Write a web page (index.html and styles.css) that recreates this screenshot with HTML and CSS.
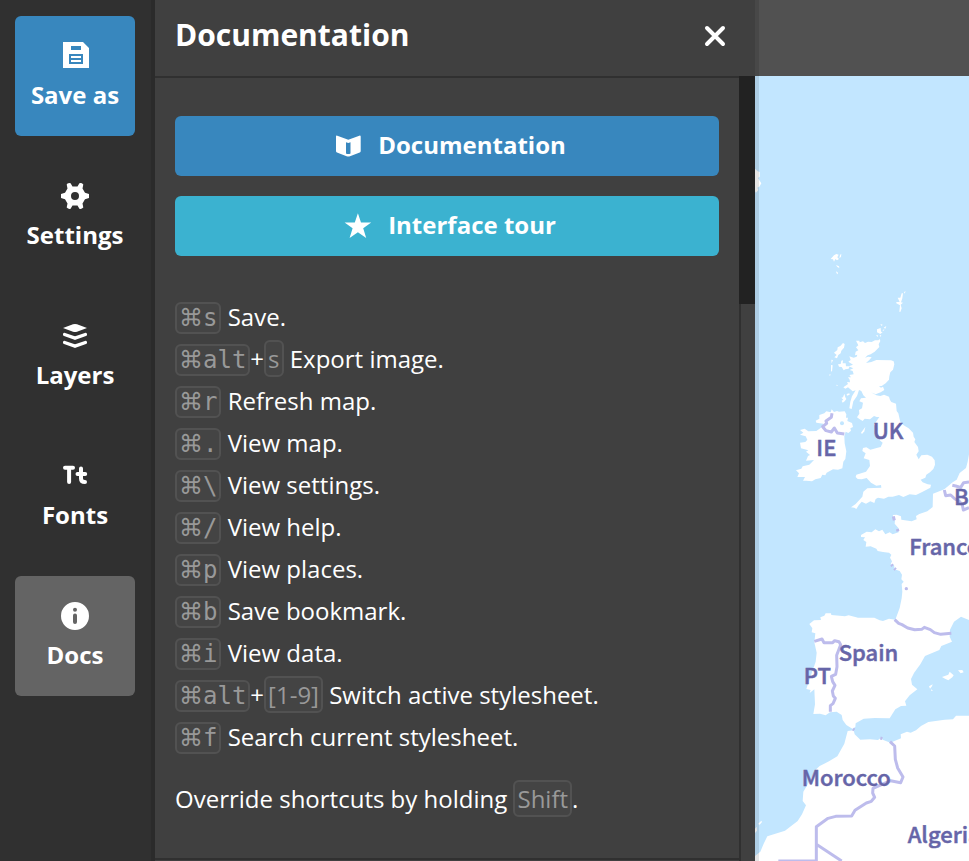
FILE: index.html
```
<!DOCTYPE html>
<html lang="en">
<head>
<meta charset="utf-8">
<title>Documentation</title>
<link rel="stylesheet" href="styles.css">
</head>
<body>
<div class="app">
  <nav class="sidebar">
    <button class="tab tab-primary" type="button">
      <svg class="icon" viewBox="0 0 40 40" aria-hidden="true"><path fill-rule="evenodd" d="M8 6H28L34 12V32H8ZM16 10H26V14H16ZM14 18H28V28H14ZM16 20V22H26V20ZM16 24V26H26V24Z"/></svg>
      <span>Save as</span>
    </button>
    <button class="tab" type="button">
      <svg class="icon" viewBox="0 0 40 40" aria-hidden="true"><path fill-rule="evenodd" d="M12.5 7.5Q14 6.500 15.600 7.200L17.500 10.500H22.500L24.400 7.200Q26.500 6.500 28.300 8.500L27.500 12.500L30 16.700L34 18V22L30 23.300L27.500 27.500L28.300 31.500Q26.500 33.500 24.400 32.800L22.500 29.500H17.500L15.600 32.800Q13.500 33.500 11.700 31.500L12.500 27.500L10 23.300L6 22V18L10 16.700L12.500 12.500L11.700 8.500ZM20 16A4 4 0 1 0 20 24A4 4 0 1 0 20 16Z"/></svg>
      <span>Settings</span>
    </button>
    <button class="tab" type="button">
      <svg class="icon" viewBox="0 0 40 40" aria-hidden="true"><path d="M8 12L18 8.300Q20 7.700 22 8.300L32 12L22 15.700Q20 16.300 18 15.700Z"/><path class="stroke" d="M9.600 18.500L20 22.200L30.400 18.500M9.600 26.500L20 30.200L30.400 26.500"/></svg>
      <span>Layers</span>
    </button>
    <button class="tab" type="button">
      <svg class="icon" viewBox="0 0 40 40" aria-hidden="true"><path class="stroke bold" d="M10 11.700H18M14.100 12V26M26 12.500V22.500Q26 26 30 26M22.500 18H30.200"/></svg>
      <span>Fonts</span>
    </button>
    <button class="tab tab-active" type="button">
      <svg class="icon" viewBox="0 0 40 40" aria-hidden="true"><path fill-rule="evenodd" d="M20 6A14 14 0 1 0 20 34A14 14 0 1 0 20 6ZM20 11.800A2 2 0 1 1 20 15.800A2 2 0 1 1 20 11.800ZM18 19.500A2 2 0 0 1 22 19.500V26A2 2 0 0 1 18 26Z"/></svg>
      <span>Docs</span>
    </button>
  </nav>

  <main class="panel">
    <header class="panel-head">
      <h1>Documentation</h1>
      <button class="close" type="button" aria-label="Close"><svg class="icon" viewBox="0 0 40 40" aria-hidden="true"><path class="stroke bold" d="M12 12L28 28M28 12L12 28"/></svg></button>
    </header>
    <div class="panel-body">
      <div class="content">
        <section class="docs">
          <div class="actions">
            <a class="action action-docs" href="#docs"><svg class="icon" viewBox="0 0 40 40" aria-hidden="true"><path fill-rule="evenodd" d="M8 10.500Q8 9.300 9.300 9.700L20.300 13.700L31.300 9.700Q32.700 9.300 32.700 10.500V25Q32.700 26 31.700 26.500L22 30.200Q20.300 31 18.600 30.200L9 26.500Q8 26 8 25ZM18 16.300V27.500L19 28H21.500L22.500 27.500V16.300L20.300 17Z"/></svg><span>Documentation</span></a>
            <a class="action action-tour" href="#tour"><svg class="icon" viewBox="0 0 40 40" aria-hidden="true"><path d="M19.900 7.200L23 16.500H33.200L25.200 22.300L28.200 32L19.900 26.200L11.600 32L14.600 22.300L6.600 16.500H16.800Z"/></svg><span>Interface tour</span></a>
          </div>
          <ul class="shortcuts">
            <li><kbd class="mono"><span class="cmd">⌘</span>s</kbd> Save.</li>
            <li><kbd class="mono"><span class="cmd">⌘</span>alt</kbd>+<kbd>s</kbd> Export image.</li>
            <li><kbd class="mono"><span class="cmd">⌘</span>r</kbd> Refresh map.</li>
            <li><kbd class="mono"><span class="cmd">⌘</span>.</kbd> View map.</li>
            <li><kbd class="mono"><span class="cmd">⌘</span>\</kbd> View settings.</li>
            <li><kbd class="mono"><span class="cmd">⌘</span>/</kbd> View help.</li>
            <li><kbd class="mono"><span class="cmd">⌘</span>p</kbd> View places.</li>
            <li><kbd class="mono"><span class="cmd">⌘</span>b</kbd> Save bookmark.</li>
            <li><kbd class="mono"><span class="cmd">⌘</span>i</kbd> View data.</li>
            <li><kbd class="mono"><span class="cmd">⌘</span>alt</kbd>+<kbd>[1-9]</kbd> Switch active stylesheet.</li>
            <li><kbd class="mono"><span class="cmd">⌘</span>f</kbd> Search current stylesheet.</li>
          </ul>
          <p class="note">Override shortcuts by holding <kbd>Shift</kbd>.</p>
        </section>
      </div>
      <div class="scrollbar"><div class="thumb"></div></div>
    </div>
  </main>

  <section class="stage">
    <div class="toolbar"></div>
    <svg class="map" viewBox="0 0 642 2355" preserveAspectRatio="xMinYMin slice" role="img" aria-label="Map of western Europe">
      <!-- Iceland and the northern islands -->
      <g class="land">
        <path d="M0 278L8 286L14 288V302L9 306L15 316L19 322L13 332L7 335L10 342L3 350L0 346Z"/>
        <g transform="translate(0 492)">
          <path d="M227 57L237 46L244 42L251 44L247 52L252 57L246 61L241 57L237 65L234 58ZM255 45L259 41L258 51L253 54ZM243 75L252 79L253 84L247 81ZM244 94L249 98L248 103L244 99Z"/>
          <path d="M428 173L436 173L440 160L444 160L442 175L438 187L444 188L437 194L440 205L436 216L433 215L435 196L424 190L424 186L434 186ZM447 156L452 154L449 161Z"/>
          <path d="M366 268L377 264L378 275L383 276L376 282L366 277ZM376 252L383 254L380 258ZM386 263L394 258L391 266ZM382 271L388 268L387 272ZM374 286L379 286L376 291ZM363 286L369 286L368 291Z"/>
          <path d="M264 309L269 312L267 323L259 332L257 340L250 345L246 355L238 352L245 345L237 338L247 330L248 322L256 318ZM229 359L234 360L230 370ZM228 375L233 376L231 395L228 393ZM222 404L227 403L225 408ZM249 373L257 372L259 362L264 361L263 370L272 370L273 379L284 379L281 386L271 388L266 391L260 381L252 380ZM243 434L249 436L246 438ZM259 473L264 472L268 461L271 472L274 477L269 484L263 488L260 482L265 479ZM275 462L283 460L284 464L276 467Z"/>
          <path d="M303 302L313 302L314 307L324 304L330 309L339 305L350 306L360 301L370 301L374 297L376 303L371 313L373 321L359 335L347 343L338 346L330 353L340 350L350 352L343 360L333 369L349 366L364 360L408 361L416 364L418 373L414 389L406 397L403 409L402 419L392 430L380 438L372 439L378 443L384 440L388 450L377 457L362 463L348 457L364 466L376 468L387 464L402 470L405 480L409 486L423 491L425 513L430 520L436 546L446 556L461 565L474 578L476 590L481 598L478 606L489 621L491 634L484 644L488 652L491 658L499 646L517 644L531 650L539 661L540 674L535 687L525 697L514 704L511 713L497 719L503 727L518 733L528 734L526 743L503 755L483 765L464 763L445 771L432 765L413 770L400 770L387 776L369 773L362 777L358 789L346 784L333 791L320 785L311 796L304 807L298 803L288 802L302 792L322 770L325 755L337 745L379 743L378 735L364 737L348 728L335 714L320 718L308 717L302 711L304 704L333 695L345 678L343 660L326 655L332 640L322 633L324 624L334 622L346 629L365 624L377 621L383 608L374 601L375 594L366 586L367 564L357 554L373 531L365 531L357 528L345 538L329 536L323 543L313 537L306 532L313 521L312 510L321 505L324 488L313 484L318 475L333 473L325 466L319 453L312 450L306 468L295 484L290 507L283 505L286 485L291 469L302 451L293 454L279 442L271 446L265 442L279 432L276 426L285 427L284 419L279 412L288 412L283 405L296 403L293 393L284 390L295 385L281 379L294 374L280 365L287 360L283 349L296 353L305 350L307 344L300 346L302 335L310 331L303 322L310 316Z"/>
          <path d="M318 578L331 561L328 574L321 582Z"/>
        </g>
        <!-- Ireland and the continent -->
        <g transform="translate(0 972)">
          <path d="M182 62L193 56L193 45L208 40L214 34L227 37L230 28L237 36L246 33L252 35L269 34L274 43L273 53L279 53L277 63L291 69L294 81L286 85L288 92L280 99L272 95L268 109L269 130L274 154L271 177L265 185L262 205L249 209L234 208L215 218L211 226L202 224L197 234L181 238L171 244L154 242L144 242L150 231L127 231L132 220L123 211L139 206L143 199L163 194L177 180L153 182L159 168L165 165L153 155L160 151L138 145L135 128L151 126L157 119L152 109L135 104L145 98L135 90L149 86L160 94L184 93L202 80L205 71L184 68Z"/>
          <path d="M642 163L638 185L633 204L614 219L605 239L593 247L568 268L534 281L533 321L517 334L493 342L483 348L485 358L470 364L439 359L438 349L425 344L413 345L420 361L419 371L430 384L431 397L413 403L404 397L391 403L382 389L372 394L361 388L350 397L335 395L318 405L318 411L330 412L325 420L334 426L332 440L347 439L364 446L368 453L384 456L402 458L409 464L405 473L411 484L407 493L417 494L419 508L434 513L441 524L439 538L446 545L440 552L442 575L440 595L434 624L421 659L402 656L384 663L374 661L358 653L309 653L281 646L270 649L229 645L228 640L212 640L208 647L196 652L198 660L177 661L163 672L172 685L170 697L181 700L178 727L185 758L182 785L165 834L154 867L167 870L164 879L178 868L180 913L175 942L195 941L212 946L225 937L245 935L260 945L263 960L274 975L292 986L301 981L302 970L326 956L359 954L404 955L421 928L438 918L454 917L450 904L464 886L487 868L471 854L468 837L477 819L496 793L510 768L553 750L559 738L591 725L584 710L585 689L597 665L618 650L642 660Z"/>
          <path d="M561 831L580 824L584 815L596 826L592 832L580 841L570 836ZM609 811L622 810L626 817L617 820ZM522 859L533 853L531 859L525 866ZM529 868L534 872L528 872Z"/>
        </g>
        <!-- North Africa -->
        <path transform="translate(0 1872)" d="M642 47L603 47L594 58L569 59L520 66L498 78L483 91L467 98L456 95L437 103L438 115L406 128L385 120L376 115L369 120L345 118L316 119L299 103L296 91L278 93L268 131L247 169L222 184L194 198L182 209L166 240L145 275L143 303L153 316L141 343L128 363L90 392L37 409L26 431L16 455L0 468V483H642ZM9 372L19 362L21 366L14 374ZM0 386L5 380L6 392L0 399Z"/>
      </g>
      <circle class="lake" cx="261" cy="1042" r="6"/>
      <g class="border">
        <path transform="translate(0 972)" d="M231 40L229 52L213 63L215 70L203 80L213 92L229 96L238 84L247 99L268 102M592 256L602 258L617 262L626 248L642 246M568 270L572 287L587 285L600 297L612 303L622 315L625 330L642 323M415 349L418 361M427 387L429 394M409 494L413 498M418 505L422 509"/>
        <path transform="translate(0 1512)" d="M419 119L431 130L441 134L458 144L479 149L500 148L508 142L526 149L538 158L557 163L589 160M178 184L201 177L207 188L233 188L239 182L252 185L257 194L245 226L246 260L242 283L229 289L233 305L240 316L232 333L235 348L241 355L234 371L226 377L226 395"/>
        <path transform="translate(0 1872)" d="M405 125L419 138L421 178L428 204L444 231L437 248L407 242L354 265L353 279L359 292L349 304L334 309L300 331L290 348L242 349L219 355L184 380V483M184 433L260 483M70 483H184M294 87L298 90M376 114L382 116"/>
        <circle class="dot" cx="454" cy="1538" r="5"/>
      </g>
      <g class="labels">
        <text x="353" y="1089">UK</text>
        <text x="184" y="1140">IE</text>
        <text x="597" y="1287">B</text>
        <text x="463" y="1437">France</text>
        <text x="251" y="1754">Spain</text>
        <text x="146" y="1825">PT</text>
        <text x="140" y="2131">Morocco</text>
        <text x="458" y="2302">Algeria</text>
      </g>
    </svg>
  </section>
</div>
</body>
</html>
```
FILE: styles.css
```
* {
  box-sizing: border-box;
}

body {
  margin: 0;
  background: #404040;
  color: #fff;
  font: 24px/42px "Open Sans", "DejaVu Sans", sans-serif;
}

button {
  border: 0;
  padding: 0;
  background: none;
  color: inherit;
  font: inherit;
  cursor: pointer;
}

.app {
  display: grid;
  grid-template-columns: 155px 600px minmax(0, 1fr);
  height: 100vh;
  overflow: hidden;
}

.icon {
  display: block;
  flex: none;
  width: 40px;
  height: 40px;
  fill: #fff;
}

.stroke {
  fill: none;
  stroke: #fff;
  stroke-width: 3.4;
  stroke-linecap: round;
  stroke-linejoin: round;
}

.stroke.bold {
  stroke-width: 4;
}

/* Sidebar */
.sidebar {
  display: flex;
  flex-direction: column;
  gap: 20px;
  padding: 16px 16px 16px 15px;
  border-right: 4px solid #2b2b2b;
  background: #303030;
}

.tab {
  display: flex;
  flex-direction: column;
  align-items: center;
  flex: none;
  height: 120px;
  padding-top: 20px;
  border-radius: 6px;
  font-weight: 700;
  line-height: 38px;
}

.tab-primary {
  background: #3887be;
}

.tab-active {
  background: #646464;
}

/* Panel */
.panel {
  display: flex;
  flex-direction: column;
  min-height: 0;
  background: #404040;
}

.panel-head {
  display: flex;
  flex: none;
  align-items: center;
  justify-content: space-between;
  height: 76px;
  padding: 0 20px 4px;
}

h1 {
  margin: 0;
  padding-bottom: 2px;
  font-size: 30px;
  font-weight: 700;
  line-height: 40px;
}

.panel-body {
  display: flex;
  flex: 1;
  min-height: 0;
}

.content {
  flex: 1;
  overflow: hidden;
  border-top: 2px solid #303030;
}

.docs {
  padding: 38px 20px;
  border-bottom: 2px solid #303030;
}

.scrollbar {
  width: 16px;
  border-left: 2px solid #303030;
}

.thumb {
  height: 29%;
  margin-left: -2px;
  background: #222;
}

.actions {
  display: grid;
  gap: 20px;
}

.action {
  display: flex;
  align-items: center;
  justify-content: center;
  gap: 10px;
  height: 60px;
  border-radius: 6px;
  color: #fff;
  font-weight: 700;
  text-decoration: none;
}

.action span {
  padding-bottom: 2px;
}

.action-docs {
  background: #3887be;
}

.action-tour {
  background: #3bb2d0;
}

.shortcuts {
  margin: 40px 0 20px;
  padding: 0;
  list-style: none;
}

.note {
  margin: 0;
}

kbd {
  padding: 0 2px;
  border: 2px solid #525252;
  border-radius: 6px;
  background: #444;
  color: #999;
  font-family: inherit;
  line-height: 24px;
}

kbd.mono {
  font-family: "DejaVu Sans Mono", monospace;
}

.cmd {
  font-family: "DejaVu Sans", sans-serif;
}

/* Map */
.stage {
  display: flex;
  flex-direction: column;
  position: relative;
  min-width: 0;
  min-height: 0;
}

.stage::after {
  content: "";
  position: absolute;
  inset: 0 auto 0 0;
  width: 4px;
  background: rgba(0, 0, 0, 0.1);
}

.toolbar {
  flex: none;
  height: 76px;
  background: #515151;
}

.map {
  flex: 1;
  width: 100%;
  min-height: 0;
  background: #c2e6ff;
}

.land {
  fill: #fff;
}

.lake {
  fill: #c2e6ff;
}

.border {
  fill: none;
  stroke: #bdbcec;
  stroke-width: 9;
  stroke-linejoin: round;
}

.dot {
  fill: #bdbcec;
  stroke: none;
}

.labels {
  fill: #6665a8;
  stroke: #6665a8;
  stroke-width: 1.5;
  font: 500 66px "Noto Sans CJK SC", "Noto Sans", sans-serif;
}
```
